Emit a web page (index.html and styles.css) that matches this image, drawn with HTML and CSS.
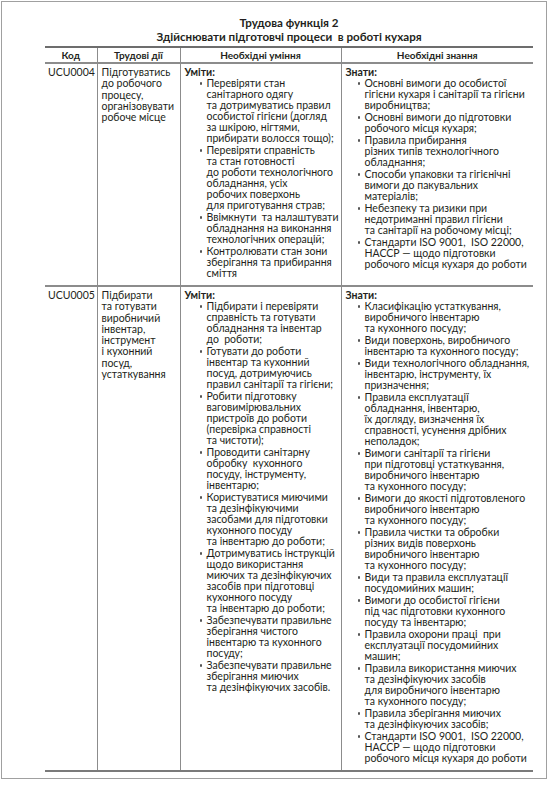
FILE: index.html
```html
<!DOCTYPE html>
<html lang="uk">
<head>
<meta charset="utf-8">
<title>Трудова функція 2</title>
<link rel="stylesheet" href="styles.css">
</head>
<body>
<div class="page">
  <h1 class="title"><span class="t-line">Трудова функція 2</span><span class="t-line">Здійснювати підготовчі процеси&nbsp; в роботі кухаря</span></h1>
  <table class="grid">
    <colgroup>
      <col class="c-code"><col class="c-act"><col class="c-skill"><col class="c-know">
    </colgroup>
    <thead>
      <tr><th>Код</th><th>Трудові дії</th><th>Необхідні уміння</th><th>Необхідні знання</th></tr>
    </thead>
    <tbody>
      <tr>
        <td class="code">UCU0004</td>
        <td class="act">Підготуватись<br>до робочого<br>процесу,<br>організовувати<br>робоче місце</td>
        <td class="skill">
          <div class="lead">Уміти:</div>
          <ul>
            <li>Перевіряти стан<br>санітарного одягу<br>та дотримуватись правил<br>особистої гігієни (догляд<br>за шкірою, нігтями,<br>прибирати волосся тощо);</li>
            <li>Перевіряти справність<br>та стан готовності<br>до роботи технологічного<br>обладнання, усіх<br>робочих поверхонь<br>для приготування страв;</li>
            <li>Ввімкнути&nbsp; та налаштувати<br>обладнання на виконання<br>технологічних операцій;</li>
            <li>Контролювати стан зони<br>зберігання та прибирання<br>сміття</li>
          </ul>
        </td>
        <td class="know">
          <div class="lead">Знати:</div>
          <ul>
            <li>Основні вимоги до особистої<br>гігієни кухаря і санітарії та гігієни<br>виробництва;</li>
            <li>Основні вимоги до підготовки<br>робочого місця кухаря;</li>
            <li>Правила прибирання<br>різних типів технологічного<br>обладнання;</li>
            <li>Способи упаковки та гігієнічні<br>вимоги до пакувальних<br>матеріалів;</li>
            <li>Небезпеку та ризики при<br>недотриманні правил гігієни<br>та санітарії на робочому місці;</li>
            <li>Стандарти ISO 9001,&nbsp; ISO 22000,<br>НАССР — щодо підготовки<br>робочого місця кухаря до роботи</li>
          </ul>
        </td>
      </tr>
      <tr>
        <td class="code">UCU0005</td>
        <td class="act">Підбирати<br>та готувати<br>виробничий<br>інвентар,<br>інструмент<br>і кухонний<br>посуд,<br>устаткування</td>
        <td class="skill">
          <div class="lead">Уміти:</div>
          <ul>
            <li>Підбирати і перевіряти<br>справність та готувати<br>обладнання та інвентар<br>до&nbsp; роботи;</li>
            <li>Готувати до роботи<br>інвентар та кухонний<br>посуд, дотримуючись<br>правил санітарії та гігієни;</li>
            <li>Робити підготовку<br>ваговимірювальних<br>пристроїв до роботи<br>(перевірка справності<br>та чистоти);</li>
            <li>Проводити санітарну<br>обробку&nbsp; кухонного<br>посуду, інструменту,<br>інвентарю;</li>
            <li>Користуватися миючими<br>та дезінфікуючими<br>засобами для підготовки<br>кухонного посуду<br>та інвентарю до роботи;</li>
            <li>Дотримуватись інструкцій<br>щодо використання<br>миючих та дезінфікуючих<br>засобів при підготовці<br>кухонного посуду<br>та інвентарю до роботи;</li>
            <li>Забезпечувати правильне<br>зберігання чистого<br>інвентарю та кухонного<br>посуду;</li>
            <li>Забезпечувати правильне<br>зберігання миючих<br>та дезінфікуючих засобів.</li>
          </ul>
        </td>
        <td class="know">
          <div class="lead">Знати:</div>
          <ul>
            <li>Класифікацію устаткування,<br>виробничого інвентарю<br>та кухонного посуду;</li>
            <li>Види поверхонь, виробничого<br>інвентарю та кухонного посуду;</li>
            <li>Види технологічного обладнання,<br>інвентарю, інструменту, їх<br>призначення;</li>
            <li>Правила експлуатації<br>обладнання, інвентарю,<br>їх догляду, визначення їх<br>справності, усунення дрібних<br>неполадок;</li>
            <li>Вимоги санітарії та гігієни<br>при підготовці устаткування,<br>виробничого інвентарю<br>та кухонного посуду;</li>
            <li>Вимоги до якості підготовленого<br>виробничого інвентарю<br>та кухонного посуду;</li>
            <li>Правила чистки та обробки<br>різних видів поверхонь<br>виробничого інвентарю<br>та кухонного посуду;</li>
            <li>Види та правила експлуатації<br>посудомийних машин;</li>
            <li>Вимоги до особистої гігієни<br>під час підготовки кухонного<br>посуду та інвентарю;</li>
            <li>Правила охорони праці&nbsp; при<br>експлуатації посудомийних<br>машин;</li>
            <li>Правила використання миючих<br>та дезінфікуючих засобів<br>для виробничого інвентарю<br>та кухонного посуду;</li>
            <li>Правила зберігання миючих<br>та дезінфікуючих засобів;</li>
            <li>Стандарти ISO 9001,&nbsp; ISO 22000,<br>НАССР — щодо підготовки<br>робочого місця кухаря до роботи</li>
          </ul>
        </td>
      </tr>
    </tbody>
  </table>
</div>
</body>
</html>
```

FILE: styles.css
```css
html, body {
  margin: 0;
  padding: 0;
  background: #ffffff;
}

body {
  font-family: Lato, "Liberation Sans", sans-serif;
  color: #231f20;
}

.page {
  margin: 1px;
  width: 544px;
  height: 776px;
  border: 1px solid #a0a0a0;
  box-sizing: content-box;
  padding: 0;
}

.title {
  margin: 14px 0 0 0;
  padding-left: 42px;
  width: 490px;
  text-align: center;
  font-size: 11.6px;
  font-weight: 700;
  color: #231f20;
}

.t-line {
  display: block;
  height: 14px;
  line-height: 14px;
}

.grid {
  margin: 2px 0 0 43px;
  width: 488px;
  border-collapse: collapse;
  table-layout: fixed;
  font-size: 10.5px;
  line-height: 11px;
}

.c-code { width: 52px; }
.c-act { width: 83px; }
.c-skill { width: 161px; }
.c-know { width: 192px; }

.grid th {
  font-weight: 700;
  font-size: 10px;
  height: 14px;
  padding: 0;
  line-height: 14px;
  text-align: center;
  border-top: 2px solid #6d6d6d;
  border-bottom: 2px solid #8c8c8c;
  border-left: 1px solid #8c8c8c;
}

.grid th:first-child,
.grid td:first-child {
  border-left: none;
}

.grid td {
  vertical-align: top;
  padding: 3px 3px 6px 4px;
  white-space: nowrap;
  border-left: 1px solid #8c8c8c;
  border-bottom: 2px solid #8c8c8c;
}

.grid tbody tr:last-child td {
  border-bottom: 2px solid #7a7a7a;
}

.grid td.code,
.grid td.act {
  line-height: 11.3px;
}

.grid td.code {
  padding-left: 3px;
}

.lead {
  font-weight: 700;
}

.grid ul {
  list-style: none;
  margin: 0;
  padding: 0;
}

.grid li + li {
  margin-top: 1px;
}

.skill li {
  padding-left: 22px;
  text-indent: -7px;
}

.know li {
  padding-left: 19px;
  text-indent: -7px;
}

.grid li::before {
  content: "";
  display: inline-block;
  width: 2.5px;
  height: 2.5px;
  border-radius: 50%;
  background: #555;
  margin: 0 4.5px 2px 0;
  vertical-align: middle;
}
```
